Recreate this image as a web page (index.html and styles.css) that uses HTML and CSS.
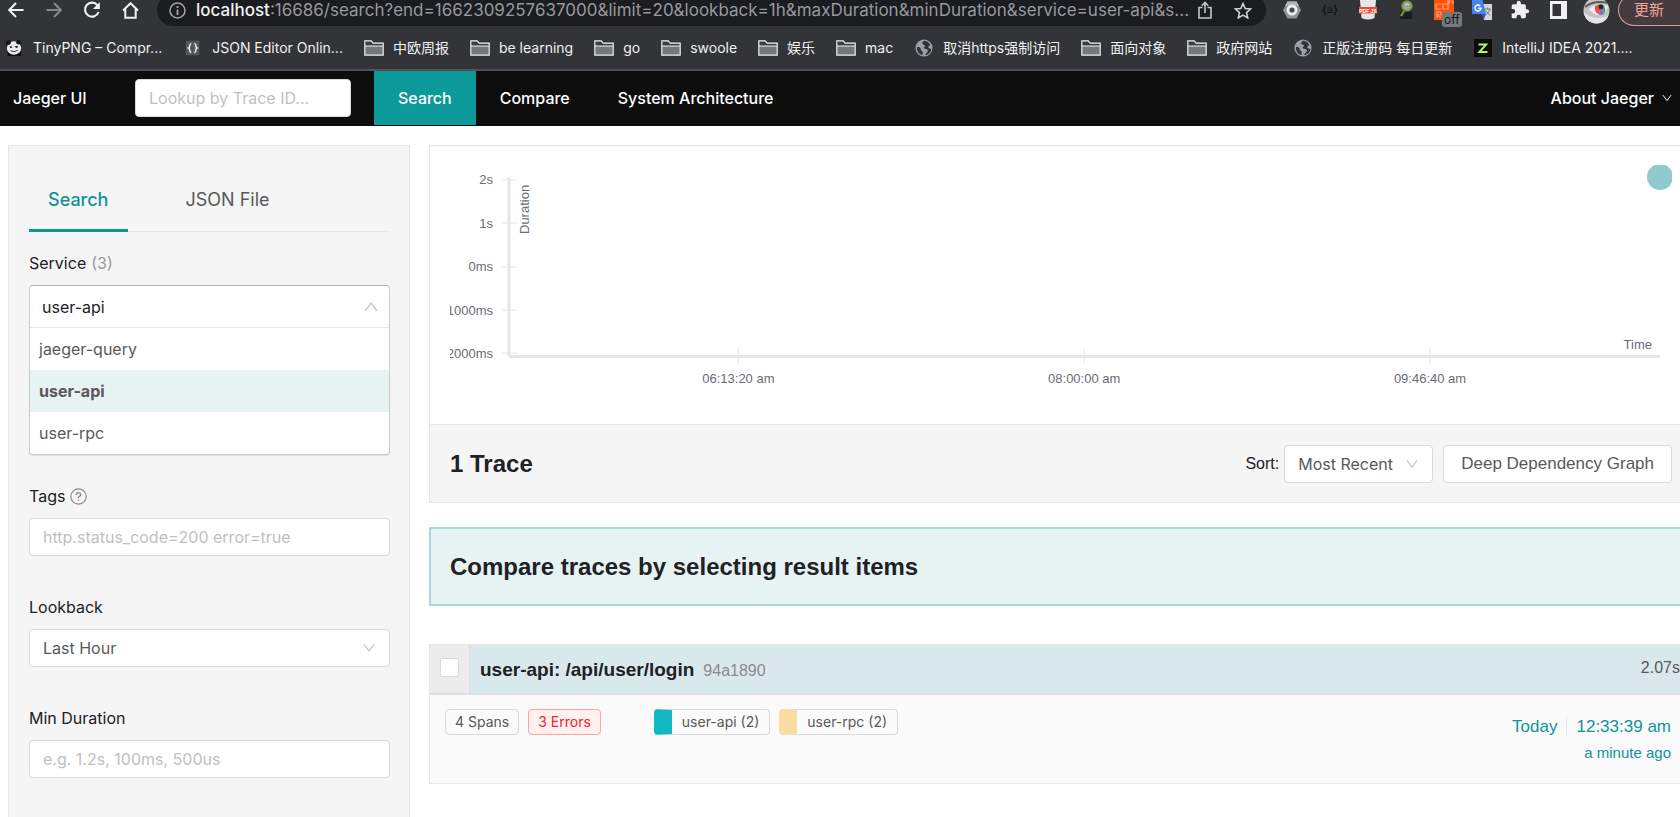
FILE: index.html
```html
<!DOCTYPE html>
<html lang="en">
<head>
<meta charset="utf-8">
<title>Jaeger UI</title>
<link rel="stylesheet" href="styles.css">
</head>
<body>
<svg class="defs" width="0" height="0" aria-hidden="true">
  <symbol id="folder" viewBox="0 0 20 16"><path d="M1 15V1h6l2 2h10v12z" fill="#77787a"/><path d="M1 1h6l2 2.500h10V6H1z" fill="#3c3d40"/><path d="M.8 15.200V.8h6.400l2 2.300h10v12.100zM1 6h18" fill="none" stroke="#f1f1f1" stroke-width="1.200"/></symbol>
  <symbol id="globe" viewBox="0 0 18 18"><circle cx="9" cy="9" r="8.600" fill="#9aa0a6"/><path d="M9.500 1.800c-2 .8-2.800 2-2 3.200.8 1 2.400.6 2.600 1.800.2 1-1.600 1-1.400 2.200.2 1 2.400.6 3.600 1.400 1.200.8.6 2.200-.4 3-.9.800-1.300 1.700-1.700 2.800 3.600-.6 6-3.400 6.200-6.800-1.400.6-2.600.2-3-.8-.4-1.200.8-1.600 1.800-2.600-1-2.300-3-3.900-5.700-4.200zM1.900 8.200c1.300-.3 2.800 0 3.600 1 .7.900-.1 1.600.7 2.400.8.900 1.700.7 1.600 1.900l-.3 2.600C4.200 15.500 1.700 12.200 1.900 8.200z" fill="#333438"/></symbol>
  <symbol id="down" viewBox="0 0 12 12"><path d="M1 2.500 6 9l5-6.500" fill="none" stroke="currentColor" stroke-width="1.200"/></symbol>
</svg>

<div class="browser">
  <div class="toolbar">
    <button class="tool" aria-label="Back"><svg width="16" height="16" viewBox="0 0 16 16"><path d="M15.500 8H1.500M8 1 1.200 8 8 15" fill="none" stroke="#f1f1f1" stroke-width="2"/></svg></button>
    <button class="tool" aria-label="Forward"><svg width="16" height="16" viewBox="0 0 16 16"><path d="M.5 8h14M8 1l6.800 7L8 15" fill="none" stroke="#88898b" stroke-width="2"/></svg></button>
    <button class="tool" aria-label="Reload"><svg width="18" height="18" viewBox="0 0 18 18"><path d="M14.500 4.300A7 7 0 1 0 15.600 11" fill="none" stroke="#f1f1f1" stroke-width="2.100"/><path d="M16.800 1v7H9.900z" fill="#f1f1f1"/></svg></button>
    <button class="tool" aria-label="Home"><svg width="17" height="17" viewBox="0 0 17 17"><path d="M1 8.500 8.500 1.200 16 8.500M3.300 7v8.800h10.400V7" fill="none" stroke="#f1f1f1" stroke-width="2"/></svg></button>
    <div class="address">
      <svg width="17" height="17" viewBox="0 0 17 17"><circle cx="8.500" cy="8.500" r="7.500" fill="none" stroke="#a0a2a5" stroke-width="1.600"/><path d="M8.500 7.500V13M8.500 4v2" stroke="#a0a2a5" stroke-width="1.800"/></svg>
      <span class="url"><b>localhost</b>:16686/search?end=1662309257637000&amp;limit=20&amp;lookback=1h&amp;maxDuration&amp;minDuration&amp;service=user-api&amp;s...</span>
      <button class="tool" aria-label="Share"><svg width="14" height="18" viewBox="0 0 14 18"><path d="M4.500 6.500H1V17h12V6.500H9.500M7 12V1.500M3.800 4.800 7 1.500l3.200 3.300" fill="none" stroke="#c6c7c9" stroke-width="1.600"/></svg></button>
      <button class="tool" aria-label="Bookmark"><svg width="18" height="17" viewBox="0 0 18 17"><path d="m9 1.500 2.200 5 5.400.5-4.100 3.600 1.200 5.300L9 13.100l-4.700 2.800 1.200-5.300L1.400 7l5.400-.5z" fill="none" stroke="#d0d1d3" stroke-width="1.600"/></svg></button>
    </div>
    <div class="extensions">
      <button class="tool" aria-label="Hexagon extension"><svg width="20" height="20" viewBox="0 0 20 20"><path d="M5.500 1.500h9L19 10l-4.500 8.500h-9L1 10z" fill="#8f9193"/><path d="M5.500 1.500h9L17 6 3 6z" fill="#b4b5b6"/><circle cx="10" cy="10" r="5.500" fill="#ececec"/><circle cx="10" cy="10" r="2.600" fill="#4b4c4f"/></svg></button>
      <button class="tool" aria-label="JSON viewer extension"><svg width="16" height="12" viewBox="0 0 16 12"><path d="M4 1C1.500 1 3.500 5 1 6c2.500 1 .5 5 3 5M12 1c2.500 0 .5 4 3 5-2.500 1-.5 5-3 5" fill="none" stroke="#17181a" stroke-width="1.600"/><path d="M5 4h6M5 6.200h6M5 8.400h6" stroke="#17181a" stroke-width="1.200"/></svg></button>
      <button class="tool" aria-label="PDF extension"><svg width="18" height="20" viewBox="0 0 18 20"><path d="M1 0h16l-1.500 18q-6.500 3-13 0z" fill="#e6e6e6"/><path d="M0 7h18v6.500H0z" fill="#ee4a33"/><text x="9" y="12.500" text-anchor="middle" class="pdf">PDF JS</text></svg></button>
      <button class="tool" aria-label="Magnifier extension"><svg width="14" height="20" viewBox="0 0 14 20"><path d="M1 12q5-3 12 0v7H1z" fill="#1c1d1f"/><path d="m5 11-3 5" stroke="#6c9a35" stroke-width="2.400"/><circle cx="8" cy="6" r="4.800" fill="#9ea3a0" stroke="#6c9a35" stroke-width="1.800"/><path d="M6 5q2-2 4 0" stroke="#e4e8e6" fill="none"/></svg></button>
      <button class="tool badge-host" aria-label="cd extension, off"><svg width="20" height="20" viewBox="0 0 20 20"><path d="M0-4h20v24H0z" fill="#ff5108"/><path d="M7 4H2v5h5M14-2v11H9V4h5M15 4V1h4v3M3 18v-6h4v3H3l4 3" fill="none" stroke="#ffa079" stroke-width="1.200"/></svg><span class="badge">off</span></button>
      <button class="tool" aria-label="Translate extension"><svg width="20" height="20" viewBox="0 0 20 20"><path d="M8 4h12v16h-8z" fill="#d5d7d9"/><path d="M0-3h10l4 17H0z" fill="#4384f2"/><path d="m9 14h5l-2 5z" fill="#2a5bbf"/><path d="M8.200 5.900A3 3 0 1 0 9 8.300H6.300" fill="none" stroke="#fff" stroke-width="1.400"/><path d="M12 9h7M15.500 7.500V9M18 9q-1 4-5 6.500M13.500 10.500l4.500 5" fill="none" stroke="#74797f"/></svg></button>
      <button class="tool" aria-label="Extensions"><svg width="20" height="20" viewBox="0 0 24 24"><path d="M20.500 11H19V7a2 2 0 0 0-2-2h-4V3.500a2.500 2.500 0 0 0-5 0V5H4a2 2 0 0 0-2 2v3.800h1.500a2.700 2.700 0 0 1 0 5.400H2V20a2 2 0 0 0 2 2h3.800v-1.500a2.700 2.700 0 0 1 5.400 0V22H17a2 2 0 0 0 2-2v-4h1.500a2.500 2.500 0 0 0 0-5z" fill="#f1f1f1"/></svg></button>
      <button class="tool" aria-label="Side panel"><svg width="17" height="18" viewBox="0 0 17 18"><path d="M0 0h17v18H0z" fill="#f1f1f1"/><path d="M2.500 3H11v12H2.500z" fill="#333438"/></svg></button>
      <button class="tool" aria-label="Profile"><svg width="27" height="27" viewBox="0 0 27 27"><defs><clipPath id="face"><circle cx="13.500" cy="13.500" r="13"/></clipPath></defs><g clip-path="url(#face)"><path d="M0 0h27v27H0z" fill="#c4c4c4"/><path d="M0 15q12 10 27 3v9H0z" fill="#e3e3e3"/><path d="M2 10Q11 3 25 6" stroke="#5a5a5a" stroke-width="2" fill="none"/><path d="M6 12q8-7 19-3-3 10-10 9-6-1-9-6z" fill="#eee"/><path d="M12 9l5-2 1 5-3 5q-4-3-3-8z" fill="#e75339"/><path d="M15 17l3-5 3 5q-3 2-6 0z" fill="#9b5fd0"/><path d="M17 7q4 0 5 3l-4 2z" fill="#48a5c4"/><path d="M18 12l4-2q1 4-1 7z" fill="#48a564"/><circle cx="18" cy="10" r="2.400" fill="#202437"/></g></svg></button>
    </div>
    <button class="update" lang="zh">更新</button>
  </div>

  <nav class="bookmarks" aria-label="Bookmarks">
    <a href="#"><svg class="mark" viewBox="0 0 20 20"><path d="M1 3h17v16H3z" fill="#111"/><ellipse cx="10" cy="10" rx="8" ry="7.500" fill="#ececec"/><circle cx="4" cy="4" r="2.600" fill="#151515"/><circle cx="15" cy="3.500" r="2.600" fill="#151515"/><path d="M5.500 8.500l2 .5-1 1zM11.500 8.500l2.500-.5-1 2z" fill="#222" stroke="#222"/><path d="M6 13q4 2.500 8-.5" fill="none" stroke="#222"/></svg>TinyPNG – Compr...</a>
    <a href="#"><svg class="mark" viewBox="0 0 20 20"><path d="M2 2h15v16H2z" fill="#56575a"/><path d="M8 5C5.500 5 7.500 9 5 10c2.500 1 .5 5 3 5M11.500 5c2.500 0 .5 4 3 5-2.500 1-.5 5-3 5" fill="none" stroke="#eee" stroke-width="1.600"/></svg>JSON Editor Onlin...</a>
    <a href="#"><svg class="mark"><use href="#folder"/></svg>中欧周报</a>
    <a href="#"><svg class="mark"><use href="#folder"/></svg>be learning</a>
    <a href="#"><svg class="mark"><use href="#folder"/></svg>go</a>
    <a href="#"><svg class="mark"><use href="#folder"/></svg>swoole</a>
    <a href="#"><svg class="mark"><use href="#folder"/></svg>娱乐</a>
    <a href="#"><svg class="mark"><use href="#folder"/></svg>mac</a>
    <a href="#"><svg class="mark"><use href="#globe"/></svg>取消https强制访问</a>
    <a href="#"><svg class="mark"><use href="#folder"/></svg>面向对象</a>
    <a href="#"><svg class="mark"><use href="#folder"/></svg>政府网站</a>
    <a href="#"><svg class="mark"><use href="#globe"/></svg>正版注册码 每日更新</a>
    <a href="#"><svg class="mark" viewBox="0 0 20 20"><path d="M0 0h20v20H0z" fill="#0b0d0a"/><path d="M5 6h8.500L6 14.500h9" fill="none" stroke="#b4f56c" stroke-width="2.200"/></svg>IntelliJ IDEA 2021....</a>
  </nav>
</div>

<header class="topnav">
  <a class="brand" href="#">Jaeger UI</a>
  <input class="lookup" type="text" placeholder="Lookup by Trace ID..." aria-label="Lookup by Trace ID">
  <a class="item active" href="#">Search</a>
  <a class="item" href="#">Compare</a>
  <a class="item" href="#">System Architecture</a>
  <button class="about">About Jaeger <svg width="10" height="10"><use href="#down"/></svg></button>
</header>

<div class="page">
  <aside class="sidebar">
    <div class="tabs" role="tablist">
      <button class="tab selected" role="tab" aria-selected="true">Search</button>
      <button class="tab" role="tab" aria-selected="false">JSON File</button>
    </div>
    <form class="form">
      <div class="field">
        <label for="service">Service <span class="count">(3)</span></label>
        <div class="combo">
          <div class="combo-head">
            <input id="service" type="text" role="combobox" aria-expanded="true" aria-controls="services" value="user-api">
            <svg class="up" width="14" height="14" viewBox="0 0 14 14"><path d="M1 11 7 3l6 8" fill="none" stroke="#c4c4c4" stroke-width="1.300"/></svg>
          </div>
          <ul id="services" class="options" role="listbox">
            <li role="option">jaeger-query</li>
            <li role="option" class="current" aria-selected="true">user-api</li>
            <li role="option">user-rpc</li>
          </ul>
        </div>
      </div>
      <div class="field">
        <label for="tags">Tags <svg class="help" width="17" height="17" viewBox="0 0 17 17"><circle cx="8.500" cy="8.500" r="7.700" fill="none" stroke="#8c8c8c" stroke-width="1.200"/><path d="M6.300 7q0-2.300 2.200-2.300T10.700 6.700q0 1.200-2.200 2.400V10.300M8.500 11.400v1.400" fill="none" stroke="#8c8c8c" stroke-width="1.300"/></svg></label>
        <input id="tags" class="control" type="text" placeholder="http.status_code=200 error=true">
      </div>
      <div class="field">
        <label for="lookback">Lookback</label>
        <div class="select"><select id="lookback" class="control"><option>Last Hour</option></select><svg width="12" height="12"><use href="#down"/></svg></div>
      </div>
      <div class="field">
        <label for="min">Min Duration</label>
        <input id="min" class="control" type="text" placeholder="e.g. 1.2s, 100ms, 500us">
      </div>
    </form>
  </aside>

  <main class="results">
    <section class="summary">
      <div class="plot">
        <svg class="chart" role="img" aria-label="Trace durations over time">
          <g class="tick">
            <path d="M52 15h15M52 58h15M52 102h15M52 145h15M52 188h15"/>
            <path d="M59 12v179" class="axis"/>
          </g>
          <rect x="59" y="190" width="94.200%" height="3" class="bar"/>
          <g class="tick">
            <line x1="23.600%" x2="23.600%" y1="184" y2="199"/>
            <line x1="51.900%" x2="51.900%" y1="184" y2="199"/>
            <line x1="80.200%" x2="80.200%" y1="184" y2="199"/>
          </g>
          <g class="ylabel">
            <text x="43" y="19">2s</text><text x="43" y="63">1s</text><text x="43" y="106">0ms</text><text x="43" y="150">-1000ms</text><text x="43" y="193">-2000ms</text>
          </g>
          <text transform="translate(79 69) rotate(-90)">Duration</text>
          <g class="xlabel">
            <text x="23.600%" y="218">06:13:20 am</text><text x="51.900%" y="218">08:00:00 am</text><text x="80.200%" y="218">09:46:40 am</text>
          </g>
          <svg x="100%" y="0" overflow="visible"><text x="-20" y="184" class="end">Time</text><circle cx="-12" cy="12" r="13" fill="#8fcacd"/></svg>
        </svg>
      </div>
      <div class="heading">
        <h2>1 Trace</h2>
        <label class="sort" for="sort">Sort:</label>
        <div class="select small"><select id="sort" class="control"><option>Most Recent</option></select><svg width="12" height="12"><use href="#down"/></svg></div>
        <button class="deep">Deep Dependency Graph</button>
      </div>
    </section>

    <section class="compare"><h2>Compare traces by selecting result items</h2></section>

    <article class="trace">
      <div class="trace-head">
        <div class="pick"><input type="checkbox" aria-label="Select trace 94a1890"></div>
        <a class="trace-title" href="#"><h3>user-api: /api/user/login</h3><small>94a1890</small><span class="duration">2.07s</span></a>
      </div>
      <div class="trace-body">
        <span class="tag">4 Spans</span>
        <span class="tag error">3 Errors</span>
        <div class="services">
          <span class="tag service api">user-api (2)</span>
          <span class="tag service rpc">user-rpc (2)</span>
        </div>
        <div class="when">
          <div class="stamp"><span>Today</span><span class="time">12:33:39 am</span></div>
          <small>a minute ago</small>
        </div>
      </div>
    </article>
  </main>
</div>
</body>
</html>
```
FILE: styles.css
```css
* { box-sizing: border-box; }
body {
  margin: 0;
  min-height: 100vh;
  display: flex;
  flex-direction: column;
  overflow: hidden;
  background: #fff;
  color: #202124;
  font: 16px/24px Inter, "Noto Sans CJK SC", sans-serif;
}
button, input, select { font: inherit; color: inherit; margin: 0; }
a { color: inherit; text-decoration: none; }
h2, h3, ul { margin: 0; padding: 0; }
svg { flex: none; }
.defs { position: absolute; }

/* Browser window */
.browser { background: #333438; color: #f1f1f1; border-bottom: 2px solid #505154; }
.toolbar { display: flex; align-items: center; height: 20px; padding-left: 3px; }
.tool {
  display: flex;
  align-items: center;
  justify-content: center;
  flex: none;
  width: 38px;
  padding: 0;
  border: 0;
  background: none;
}
.toolbar > .tool { width: 26px; margin-right: 12px; }
.address {
  display: flex;
  align-items: center;
  flex: 1;
  min-width: 0;
  height: 32px;
  padding: 0 4px 0 12px;
  margin-left: 2px;
  border-radius: 16px;
  background: #1b1c20;
}
.url {
  flex: 1;
  min-width: 0;
  margin-left: 10px;
  white-space: nowrap;
  font-size: 17px;
  color: #97999c;
}
.url b { font-weight: 500; color: #f1f1f1; }
.extensions { display: flex; align-items: center; padding-left: 7px; }
.pdf { font: 700 5px "Liberation Sans", sans-serif; fill: #fff; }
.badge-host { position: relative; }
.badge {
  position: absolute;
  left: 17px;
  top: 12px;
  padding: 0 2px;
  border-radius: 3px;
  background: #77797a;
  color: #17181a;
  font-size: 12px;
  line-height: 15px;
}
.update {
  width: 62px;
  height: 32px;
  margin-left: 3px;
  padding: 0 0 0 15px;
  border: 1px solid #e39a94;
  border-right: 0;
  border-radius: 16px 0 0 16px;
  background: #463c3f;
  color: #f2a29c;
  font-size: 15px;
  text-align: left;
}
.bookmarks {
  display: flex;
  align-items: center;
  gap: 21px;
  height: 49px;
  padding: 7px 0 0 4px;
  overflow: hidden;
  white-space: nowrap;
  font-size: 14px;
}
.bookmarks a { display: flex; align-items: center; gap: 9px; flex: none; }
.mark { width: 20px; height: 18px; }

/* Jaeger navigation */
.topnav {
  display: flex;
  align-items: center;
  height: 55px;
  padding: 0 8px 1px 13px;
  background: #0d0d0d;
  color: #fff;
  font-weight: 500;
}
.brand { width: 122px; }
.lookup {
  width: 216px;
  height: 38px;
  margin-right: 23px;
  padding: 0 13px;
  border: 1px solid #d9d9d9;
  border-radius: 4px;
  background: #fff;
  color: #333;
  font-weight: 400;
}
::placeholder { color: #bfbfbf; opacity: 1; }
.item { padding: 15px 24px; }
.item.active { background: #0b9999; }
.about {
  display: flex;
  align-items: center;
  gap: 8px;
  margin-left: auto;
  padding: 0;
  border: 0;
  background: none;
}

/* Search panel */
.page { display: flex; flex: 1; padding: 19px 0 0 8px; }
.sidebar {
  width: 402px;
  flex: none;
  margin-right: 19px;
  padding: 0 19px 0 20px;
  border: 1px solid #e6e6e6;
  border-bottom: 0;
  background: #f5f5f5;
}
.tabs { display: flex; gap: 38px; padding-top: 23px; border-bottom: 1px solid #e8e8e8; }
.tab {
  height: 63px;
  margin-bottom: -1px;
  padding: 2px 20px 0 19px;
  border: 0;
  border-bottom: 3px solid transparent;
  background: none;
  color: #595959;
  font-size: 18px;
}
.tab.selected { color: #11939a; border-color: #11939a; font-weight: 500; }
.field { display: flex; flex-direction: column; gap: 10px; margin-bottom: 39px; }
.field:first-child { padding-top: 19px; margin-bottom: 29px; }
.field label { display: flex; align-items: center; gap: 5px; }
.count { color: #999; }
.control {
  width: 100%;
  height: 38px;
  padding: 0 13px;
  border: 1px solid #d9d9d9;
  border-radius: 4px;
  background: #fff;
  color: #333;
}
.select { display: grid; align-items: center; }
.select > * { grid-area: 1 / 1; }
.select select { appearance: none; color: #595959; }
.select svg { justify-self: end; margin-right: 15px; color: #bfbfbf; pointer-events: none; }
.combo {
  border: 1px solid #ccc;
  border-top-color: #b3b3b3;
  border-radius: 4px;
  overflow: hidden;
  background: #fff;
  box-shadow: 0 1px 1px #ddd;
}
.combo-head { display: flex; align-items: center; height: 42px; padding: 0 11px 0 12px; border-bottom: 1px solid #e6e6e6; }
.combo-head input { flex: 1; min-width: 0; padding: 0; border: 0; outline: 0; background: none; }
.options { list-style: none; color: #595959; }
.options li { padding: 9px; }
.options .current { background: #e7f2f3; font-weight: 700; }

/* Results */
.results { flex: 1; min-width: 0; font-family: "Liberation Sans", Arial, sans-serif; }
.summary { border: 1px solid #e6e6e6; border-right: 0; }
.plot { padding: 19px 8px 0 20px; height: 278px; }
.chart { display: block; width: 100%; height: 230px; overflow: hidden; font-size: 13px; fill: #6b6b76; }
.tick { stroke: #e6e6e9; stroke-width: 1px; }
.axis { stroke-width: 3px; }
.bar { fill: #e6e6e9; }
.ylabel, .end { text-anchor: end; }
.xlabel { text-anchor: middle; }
.heading {
  display: flex;
  align-items: center;
  height: 78px;
  padding: 0 8px 0 20px;
  border-top: 1px solid #e6e6e6;
  background: #f5f5f5;
}
h2 { font-size: 24px; line-height: 32px; }
.sort { margin-left: auto; margin-right: 5px; }
.small { width: 149px; margin-right: 10px; }
.small select { font-family: Inter, sans-serif; }
.deep {
  height: 38px;
  padding: 0 17px;
  border: 1px solid #d9d9d9;
  border-radius: 4px;
  background: #fff;
  color: #595959;
  font-size: 17px;
}
.compare {
  margin: 24px 0 38px;
  padding: 22px 19px 21px;
  border: 2px solid #a8d8d9;
  border-right: 0;
  background: #e7f2f3;
}
.trace { border: 1px solid #e6e6e6; border-right: 0; background: #fafafa; }
.trace-head { display: flex; height: 50px; border-bottom: 2px solid #dde0e0; }
.pick { width: 40px; padding: 13px 10px; border-right: 1px solid #dcdcdc; background: #ececec; }
.pick input {
  display: block;
  appearance: none;
  width: 19px;
  height: 19px;
  margin: 0;
  border: 1px solid #d9d9d9;
  border-radius: 2px;
  background: #fff;
}
.trace-title { display: flex; flex: 1; align-items: baseline; padding: 12px 0 0 10px; background: #d9e8eb; }
h3 { font-size: 19px; line-height: 26px; }
.trace-title small { margin-left: 9px; font-size: 16px; color: #8c8c8c; }
.duration { margin-left: auto; align-self: flex-start; line-height: 22px; color: #595959; }
.trace-body { display: flex; align-items: flex-start; height: 88px; padding: 14px 9px 0 15px; }
.tag {
  margin-right: 9px;
  padding: 0 9px;
  border: 1px solid #d9d9d9;
  border-radius: 4px;
  color: #595959;
  font: 14px/24px Inter, sans-serif;
}
.tag.error { border-color: #ffa39e; background: #fff1f0; color: #f5222d; }
.services { display: flex; margin-left: 44px; }
.service { padding: 0 10px; border-left-width: 18px; }
.api { border-left-color: #12b8bf; }
.rpc { border-left-color: #f8dca1; }
.when { margin-left: auto; padding-top: 6px; text-align: right; color: #11939a; }
.stamp { font-size: 17px; }
.time { margin-left: 9px; padding-left: 9px; border-left: 1px solid #e6e6e6; }
.when small { display: block; font-size: 15px; line-height: 28px; }
```
